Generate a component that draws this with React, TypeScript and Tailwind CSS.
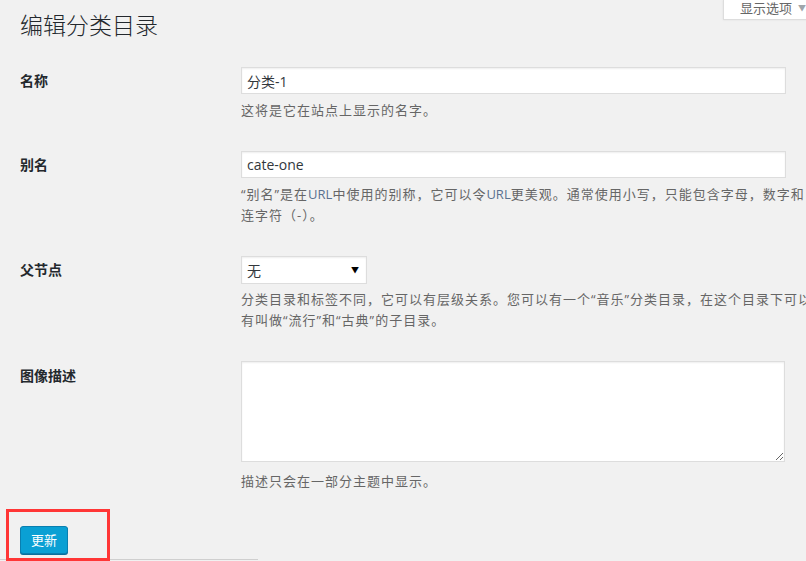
import React from "react";

const font = { fontFamily: '"Open Sans", "Noto Sans CJK SC", sans-serif' };

export default function App() {
  return (
    <div
      className="relative w-[806px] h-[561px] overflow-hidden bg-[#f1f1f1] text-[#23282d] font-['Open_Sans','Noto_Sans_CJK_SC',sans-serif]"
      style={font}
    >
      {/* Screen options tab */}
      <div className="absolute left-[723px] top-0 w-[100px] h-[20px] bg-white border-l border-b border-[#ddd] shadow-[0_0_2px_rgba(0,0,0,0.08)] flex items-start pl-[16px] text-[13px] leading-[16px] text-[#666]">
        <span>显示选项</span>
        <span className="ml-[6px] mt-[1px] text-[8px] leading-[14px] text-[#a0a5aa]">▼</span>
      </div>

      <div className="pl-[20px] pt-[8px]">
        <h1 className="text-[23px] leading-[34px] font-light text-[#23282d]">编辑分类目录</h1>

        {/* 名称 */}
        <div className="flex mt-[25px]">
          <div className="w-[221px] shrink-0 pt-[4px] text-[14px] leading-[20px] font-bold">名称</div>
          <div className="flex-1">
            <input
              readOnly
              value="分类-1"
              className="block w-[545px] h-[27px] px-[5px] bg-white border border-[#ddd] shadow-[inset_0_1px_2px_rgba(0,0,0,0.07)] text-[14px] text-[#32373c] outline-none"
            />
            <p className="mt-[6px] text-[13px] tracking-[1px] leading-[20px] text-[#666] whitespace-nowrap">这将是它在站点上显示的名字。</p>
          </div>
        </div>

        {/* 别名 */}
        <div className="flex mt-[31px]">
          <div className="w-[221px] shrink-0 pt-[4px] text-[14px] leading-[20px] font-bold">别名</div>
          <div className="flex-1">
            <input
              readOnly
              value="cate-one"
              className="block w-[545px] h-[27px] px-[5px] bg-white border border-[#ddd] shadow-[inset_0_1px_2px_rgba(0,0,0,0.07)] text-[14px] text-[#32373c] outline-none"
            />
            <p className="mt-[6px] text-[13px] tracking-[1px] leading-[21px] text-[#666] whitespace-nowrap">
              “别名”是在<span className="text-[#5a7190] tracking-normal">URL</span>中使用的别称，它可以令<span className="text-[#5a7190] tracking-normal">URL</span>更美观。通常使用小写，只能包含字母，数字和
              <br />
              连字符（-）。
            </p>
          </div>
        </div>

        {/* 父节点 */}
        <div className="flex mt-[30px]">
          <div className="w-[221px] shrink-0 pt-[4px] text-[14px] leading-[20px] font-bold">父节点</div>
          <div className="flex-1">
            <div className="relative w-[126px] h-[28px]">
              <select className="appearance-none block w-full h-full pl-[5px] bg-white border border-[#ddd] shadow-[inset_0_1px_2px_rgba(0,0,0,0.07)] text-[14px] text-[#32373c] outline-none">
                <option>无</option>
              </select>
              <span className="pointer-events-none absolute right-[8px] top-[7px] text-[8px] leading-[14px] text-black">▼</span>
            </div>
            <p className="mt-[5px] text-[13px] tracking-[1px] leading-[21px] text-[#666] whitespace-nowrap">
              分类目录和标签不同，它可以有层级关系。您可以有一个“音乐”分类目录，在这个目录下可以
              <br />
              有叫做“流行”和“古典”的子目录。
            </p>
          </div>
        </div>

        {/* 图像描述 */}
        <div className="flex mt-[30px]">
          <div className="w-[221px] shrink-0 pt-[5px] text-[14px] leading-[20px] font-bold">图像描述</div>
          <div className="flex-1">
            <textarea
              readOnly
              className="block w-[544px] h-[101px] bg-white border border-[#ddd] shadow-[inset_0_1px_2px_rgba(0,0,0,0.07)] outline-none"
            />
            <p className="mt-[9px] text-[13px] tracking-[1px] leading-[20px] text-[#666] whitespace-nowrap">描述只会在一部分主题中显示。</p>
          </div>
        </div>

        <button className="mt-[35px] h-[28px] px-[10px] rounded-[3px] bg-[#0aa0d4] border border-[#0a7fb0] shadow-[0_1px_0_#0a6f9c] text-white text-[13px] leading-[24px]">
          更新
        </button>

        <div className="mt-[5px] -ml-[20px] w-[258px] border-t border-[#cfcfcf]" />
      </div>

      {/* red annotation box */}
      <div className="absolute left-[6px] top-[509px] w-[104px] h-[52px] border-[3px] border-[#ff3636]" />
    </div>
  );
}
